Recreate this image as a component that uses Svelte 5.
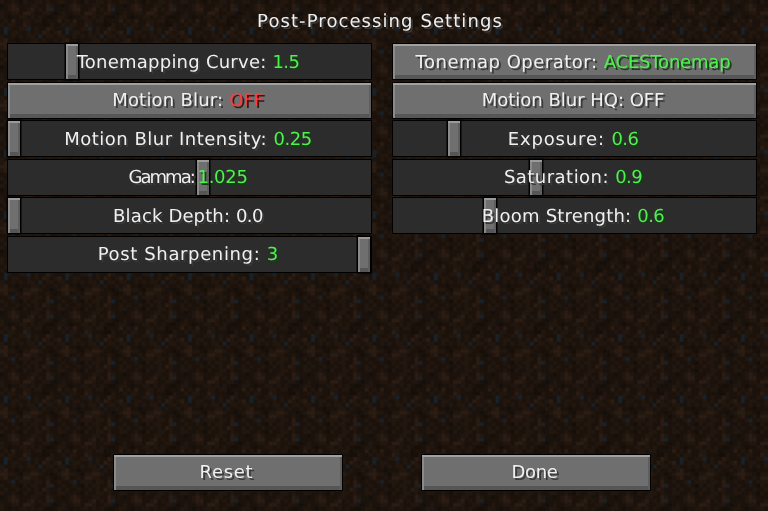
<script>
  const left = [
    { kind: 'slider', label: 'Tonemapping Curve: ', value: '1.5', pos: 0.165 },
    { kind: 'toggle', label: 'Motion Blur: ', value: 'OFF', tone: 'red' },
    { kind: 'slider', label: 'Motion Blur Intensity: ', value: '0.25', pos: 0 },
    { kind: 'slider', label: 'Gamma: ', value: '1.025', pos: 0.54 },
    { kind: 'slider', label: 'Black Depth: ', value: '0.0', pos: 0, tone: 'plain' },
    { kind: 'slider', label: 'Post Sharpening: ', value: '3', pos: 1 }
  ];
  const right = [
    { kind: 'toggle', label: 'Tonemap Operator: ', value: 'ACESTonemap' },
    { kind: 'toggle', label: 'Motion Blur HQ: ', value: 'OFF', tone: 'plain' },
    { kind: 'slider', label: 'Exposure: ', value: '0.6', pos: 0.158 },
    { kind: 'slider', label: 'Saturation: ', value: '0.9', pos: 0.39 },
    { kind: 'slider', label: 'Bloom Strength: ', value: '0.6', pos: 0.26 }
  ];
  const columns = [left, right];

  // the game font's advances, in font units; anything else is 6
  const advance = { ' ': 4, i: 2, l: 3, t: 4, I: 4, k: 5, f: 5, '.': 2, ':': 2 };
  const unit = 1.92;
  const ctx = document.createElement('canvas').getContext('2d');
  ctx.font = '18px "DejaVu Sans"';

  // letter-spacing that makes a string as wide as the game would draw it
  const fit = (text) => {
    let units = 0;
    for (const ch of text) units += advance[ch] ?? 6;
    return ((units * unit - ctx.measureText(text).width) / text.length).toFixed(3);
  };

  // hand-read dirt tile, 16x16: 0-3 dark to light, b is the bluish speck
  const tile = [
    '2112102112212112',
    '0123211122113211',
    '1123311231213b11',
    '2112213321122101',
    '2101122121210012',
    '1213112212201113',
    '2122113211100211',
    '1b21122b12113211',
    '1b12211212132123',
    '2112121221b12212',
    '2311011122121121',
    '3322102233211012',
    '2311213322112101',
    '112b122212213112',
    '2112102122113b11',
    '1211211212132112'
  ];
  const shades = { 0: '#150e09', 1: '#1b120c', 2: '#22170f', 3: '#2b1d13', b: '#17222b' };
  const cells = tile.flatMap((line, y) => [...line].map((c, x) => ({ x, y, fill: shades[c] })));
</script>

<svg class="dirt" aria-hidden="true">
  <defs>
    <pattern id="tile" width="61.44" height="61.44" patternUnits="userSpaceOnUse">
      <g transform="scale(3.84)">
        {#each cells as c}
          <rect x={c.x} y={c.y} width="1.02" height="1.02" fill={c.fill} />
        {/each}
      </g>
    </pattern>
  </defs>
  <rect width="100%" height="100%" fill="url(#tile)" />
</svg>

<main class="screen">
  <h1 style="letter-spacing: {fit('Post-Processing Settings')}px">Post-Processing Settings</h1>

  <div class="options">
    {#each columns as col}
      <div class="column">
        {#each col as opt}
          <div class="row {opt.kind}">
            {#if opt.kind === 'slider'}
              <span class="handle" style="--pos: {opt.pos}"></span>
            {/if}
            <span class="caption"><span style="letter-spacing: {fit(opt.label)}px">{opt.label}</span><span class="val {opt.tone ?? 'green'}" style="letter-spacing: {fit(opt.value)}px">{opt.value}</span></span>
          </div>
        {/each}
      </div>
    {/each}
  </div>

  <footer>
    <button class="toggle row"><span class="caption" style="letter-spacing: {fit('Reset')}px">Reset</span></button>
    <button class="toggle row"><span class="caption" style="letter-spacing: {fit('Done')}px">Done</span></button>
  </footer>
</main>

<style>
  :global(body) {
    background: #1b120c;
    overflow: hidden;
  }

  .dirt {
    position: fixed;
    inset: 0;
    width: 100%;
    height: 100%;
  }

  .screen {
    position: relative;
    height: 511px;
    display: flex;
    flex-direction: column;
    font-family: "DejaVu Sans", sans-serif;
    font-size: 18px;
    color: #f0f0f0;
    text-shadow: 2px 2px 0 #3a3a3a;
    text-rendering: geometricPrecision;
  }

  h1 {
    margin: 0;
    padding: 12px 8px 0 0;
    height: 32px;
    box-sizing: border-box;
    font-size: 18px;
    font-weight: normal;
    text-align: center;
    line-height: 20px;
  }

  .options {
    display: grid;
    grid-template-columns: 365px 365px;
    column-gap: 20px;
    padding: 11px 0 0 7px;
    align-items: start;
  }

  .column {
    display: flex;
    flex-direction: column;
    gap: 1.5px;
  }

  .row {
    position: relative;
    box-sizing: border-box;
    height: 37px;
    display: flex;
    align-items: center;
    justify-content: center;
    border: 1.5px solid #000;
    white-space: pre;
  }

  .slider {
    background: #2c2c2c;
  }

  .toggle {
    background: #6f6f6f;
    box-shadow: inset 0 2px 0 #a0a0a0, inset 2px 0 0 #8a8a8a, inset -2px 0 0 #5e5e5e, inset 0 -4px 0 #565656;
  }

  .caption {
    position: relative;
    padding: 1px 3px 0 0;
  }

  .val {
    text-shadow: 2px 2px 0 #153f15;
  }
  .green { color: #4ff04f; }
  .red { color: #ff3b3b; text-shadow: 2px 2px 0 #3f1515; }
  .plain { color: #f0f0f0; text-shadow: 2px 2px 0 #3a3a3a; }

  .handle {
    position: absolute;
    top: 0;
    bottom: 0;
    left: calc(var(--pos) * 350px);
    width: 12px;
    background: #6f6f6f;
    box-shadow: inset 0 2px 0 #9a9a9a, inset 2px 0 0 #8a8a8a, inset -2px 0 0 #5e5e5e, inset 0 -4px 0 #565656, 0 0 0 1.5px #000;
  }

  footer {
    margin-top: auto;
    display: flex;
    justify-content: center;
    gap: 78px;
    padding: 0 4px 20px 0;
  }

  footer .row {
    width: 230px;
    height: 37.5px;
    padding: 0;
    font: inherit;
    color: inherit;
    text-shadow: inherit;
  }

  footer .caption {
    padding: 0 3px 1px 0;
  }
</style>
